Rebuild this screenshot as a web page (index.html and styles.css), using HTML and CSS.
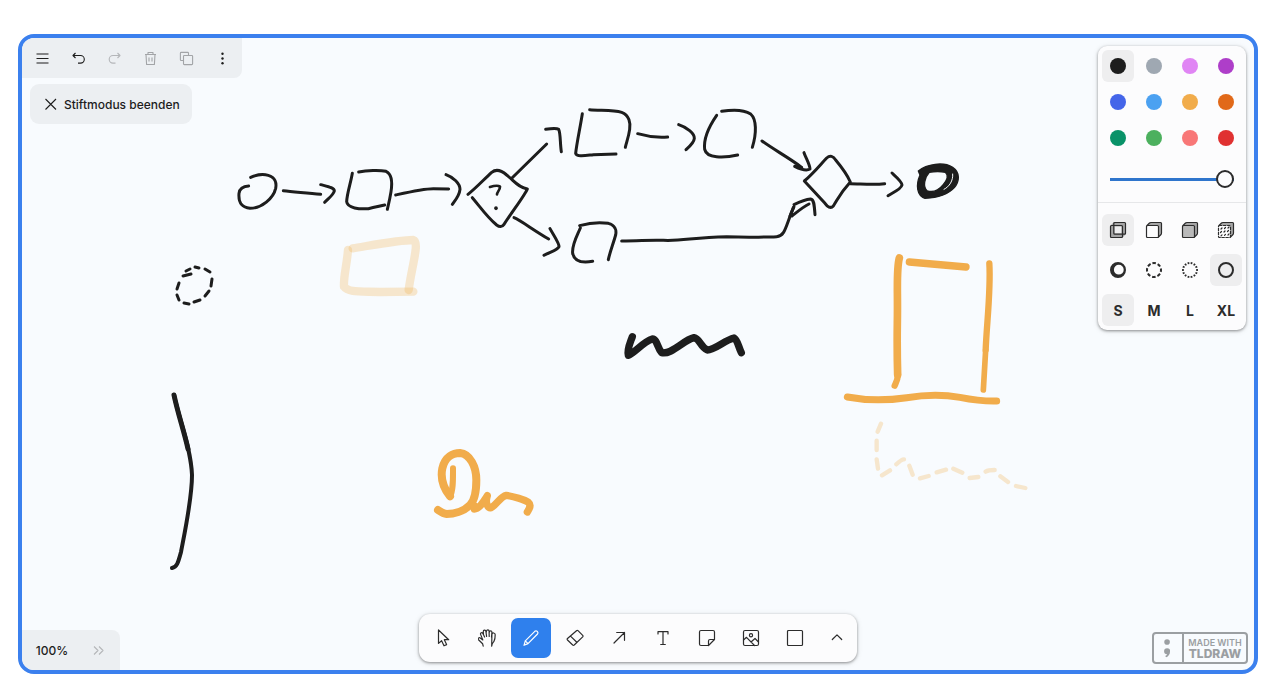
FILE: index.html
```html
<!DOCTYPE html>
<html lang="de">
<head>
<meta charset="utf-8">
<meta name="viewport" content="width=device-width, initial-scale=1">
<title>Whiteboard</title>
<link rel="stylesheet" href="styles.css">
</head>
<body>
<main class="board">
  <svg class="canvas" aria-label="Zeichenfläche">
    <g transform="translate(-22 -38)">
      <!-- flow chart, left part -->
      <g class="ink" transform="translate(220 90) scale(.33333)">
        <path d="M92 262C110 254 130 252 145 256C166 262 170 280 167 295C160 325 125 355 90 355C62 352 55 335 57 310C59 295 68 289 86 288"/>
        <path d="M190 302C220 306 260 308 302 313M302 284C325 290 343 293 343 303C340 315 325 325 314 337"/>
        <path d="M397 250C392 280 381 310 380 335C382 355 420 358 445 356C465 352 480 348 494 345M416 246C440 241 480 240 498 244C515 252 517 280 513 305C509 330 505 345 502 358"/>
        <path d="M527 315C580 303 610 296 640 296L686 297M678 254C700 262 720 280 720 298C718 318 706 330 697 343"/>
        <path d="M744 313C770 292 790 270 815 247C830 235 845 242 860 255C885 275 895 292 922 297C915 315 880 360 852 403C846 412 838 411 830 405C800 380 780 350 757 323"/>
        <path d="M810 291C820 288 835 286 840 290C840 300 832 305 831 313" stroke-width="8"/>
        <path d="M828 354V355" stroke-width="11"/>
        <path d="M876 264L980 162M882 383C900 390 940 420 986 447"/>
        <g class="marker">
          <path d="M384 480C380 530 370 560 372 590C385 608 420 604 480 606L580 605"/>
          <path d="M398 475C460 465 540 450 580 450C600 455 575 530 566 600"/>
        </g>
      </g>
      <!-- flow chart, middle part -->
      <g class="ink" transform="translate(540 90) scale(.33333)">
        <path d="M17 118C35 115 50 114 56 118C62 130 60 160 64 185M30 416C40 435 58 460 57 470C50 482 30 485 12 496"/>
        <path d="M127 71C121 110 110 160 107 190C110 202 140 196 160 194L228 192M149 59C180 62 220 60 245 67C268 75 272 100 269 118C266 140 260 155 256 172"/>
        <path d="M293 131C320 139 345 144 383 141M416 104C440 112 464 130 463 145C462 158 450 168 438 179"/>
        <path d="M530 76C510 105 490 145 494 178C500 205 550 205 593 195M545 64C575 59 610 58 632 72C650 88 650 130 637 172"/>
        <path d="M666 153C700 178 745 202 785 232"/>
        <path d="M121 414C110 440 95 465 98 490C103 515 125 520 158 514M119 407C150 398 180 396 205 400C225 405 230 420 227 435C220 460 210 485 205 509"/>
        <path d="M245 453C300 453 330 449 370 451C430 454 460 441 560 440C620 441 670 443 710 440C735 438 735 415 760 353"/>
      </g>
      <!-- flow chart, right part -->
      <g class="ink" transform="translate(740 90) scale(.33333)">
        <path d="M192 188C198 205 210 225 210 237C200 243 180 237 164 229L184 233"/>
        <path d="M162 344C180 335 200 328 212 327C222 328 223 345 225 374M156 378C170 367 190 350 207 342M150 378L162 350"/>
        <path d="M193 273C220 250 240 225 260 204C270 195 280 198 287 210C302 228 322 255 331 276C300 310 295 325 280 348C272 357 262 350 255 340Z"/>
        <path d="M331 281C360 281 400 286 434 281M456 249C468 260 486 275 486 285C483 298 460 307 444 317"/>
        <path class="blob" fill-rule="evenodd" d="M535 243C560 222 610 214 638 232C662 248 658 275 643 293C618 320 580 324 555 325C530 316 527 285 540 255ZM568 247C554 262 547 290 562 303C580 308 595 302 609 285C622 270 626 256 616 247C602 244 584 244 568 247Z"/>
        <path d="M612 298C628 290 640 272 638 252" stroke="#f8fbfe" stroke-width="3"/>
      </g>
      <!-- top hat and its dashed underline -->
      <g class="ink ink-orange" transform="translate(820 240) scale(.33333)">
        <path stroke-width="23" d="M238 54C228 90 234 150 232 250C231 320 232 370 233 404"/>
        <path stroke-width="19" d="M234 404C233 420 228 428 224 437"/>
        <path stroke-width="22" d="M268 66L438 81"/>
        <path stroke-width="19" d="M508 70C513 150 500 250 497 330"/>
        <path stroke-width="17" d="M497 330L490 450"/>
        <path stroke-width="21" d="M82 471C140 482 200 482 260 473C320 463 370 463 420 472C460 480 490 484 530 483"/>
        <path class="faint" stroke-width="13" d="M183 551L173 575M170 602V630M170 658L174 686M186 706L210 691M229 673C240 662 245 658 252 658M268 677L278 704M300 715L326 708M350 697L378 689M400 686L427 698M449 714L475 711M497 695C505 690 515 690 524 690M541 709L564 726M588 738L616 744"/>
      </g>
      <!-- squiggles -->
      <g class="ink" transform="translate(410 320) scale(.33333)">
        <path stroke-width="22" d="M667 50C660 70 650 90 655 106C675 98 700 65 727 57C742 58 742 85 755 98C785 105 820 60 852 53C870 56 870 80 892 90C915 90 945 60 972 54C983 60 985 80 994 98"/>
        <g class="ink-orange">
          <path stroke-width="18" d="M129 445C129 480 130 510 120 530"/>
          <path stroke-width="24" d="M120 529C105 510 90 480 97 445C105 410 130 399 150 399C180 402 199 440 199 480C199 510 195 540 180 555C160 575 130 582 110 582C100 581 90 574 84 570"/>
          <path stroke-width="22" d="M193 558V567C208 567 222 543 232 527C224 552 235 565 243 563C260 555 270 530 289 526C310 529 345 540 355 547C367 557 355 570 352 576"/>
        </g>
      </g>
      <g class="ink">
        <path stroke-width="3" d="M183 276L191 274M186 271L190 269M195 267L199 268M205 269L210 272M212 279L211 286M209 291L205 296M200 300L194 302M189 304L184 303M179 300L177 295M177 289L179 283"/>
        <path stroke-width="4" d="M174 395C179 419 191 448 192 475C192 498 186 526 181 552C178 563 177 567 172 568"/>
        <path stroke-width="5" d="M174 395C178 414 184 431 188 449"/>
      </g>
    </g>
  </svg>

  <header class="top">
    <div class="top-left">
      <nav class="menu" aria-label="Menü">
        <button aria-label="Menü"><svg class="icon-s" viewBox="0 0 15 15"><path d="M1.500 3H13.500M1.500 7.500H13.500M1.500 12H13.500"/></svg></button>
        <button aria-label="Rückgängig"><svg class="icon-s" viewBox="0 0 15 15"><path d="M4.500 2L2 4.500L4.500 7M2 4.500H9.500A3.800 3.800 0 0 1 9.500 12.100H7"/></svg></button>
        <button aria-label="Wiederholen" disabled><svg class="icon-s" viewBox="0 0 15 15"><path d="M10.500 2L13 4.500L10.500 7M13 4.500H6A3.800 3.800 0 0 0 6 12.100H8.500"/></svg></button>
        <button aria-label="Löschen" disabled class="mid"><svg class="icon-s" viewBox="0 0 15 15"><path d="M2 3.500H13M5 3.500V1.500H10V3.500M3 3.500L3.600 13.500H11.400L12 3.500M6 6.500V10.500M9 6.500V10.500"/></svg></button>
        <button aria-label="Duplizieren" disabled class="mid"><svg class="icon-s" viewBox="0 0 15 15"><path d="M4 9.500H2.200A.8 .8 0 0 1 1.400 8.700V2.200A.8 .8 0 0 1 2.200 1.400H8.700A.8 .8 0 0 1 9.500 2.200V4.500"/><rect x="4.500" y="4.500" width="9.100" height="9.100" rx=".8"/></svg></button>
        <button aria-label="Mehr"><svg class="icon-s dots" viewBox="0 0 15 15"><circle cx="7.500" cy="2.700" r="1.200"/><circle cx="7.500" cy="7.500" r="1.200"/><circle cx="7.500" cy="12.300" r="1.200"/></svg></button>
      </nav>
      <button class="exit"><svg class="icon-s" viewBox="0 0 15 15"><path d="M2.500 2L13 12.500M13 2L2.500 12.500"/></svg>Stiftmodus beenden</button>
    </div>

    <section class="styles" aria-label="Stile">
      <div class="colors">
        <button class="cell on c-black" aria-label="Schwarz"></button>
        <button class="cell c-grey" aria-label="Grau"></button>
        <button class="cell c-lviolet" aria-label="Hellviolett"></button>
        <button class="cell c-violet" aria-label="Violett"></button>
        <button class="cell c-blue" aria-label="Blau"></button>
        <button class="cell c-lblue" aria-label="Hellblau"></button>
        <button class="cell c-yellow" aria-label="Gelb"></button>
        <button class="cell c-orange" aria-label="Orange"></button>
        <button class="cell c-green" aria-label="Grün"></button>
        <button class="cell c-lgreen" aria-label="Hellgrün"></button>
        <button class="cell c-lred" aria-label="Hellrot"></button>
        <button class="cell c-red" aria-label="Rot"></button>
      </div>
      <div class="opacity"><input type="range" min="0" max="100" value="100" aria-label="Deckkraft"></div>
      <div class="options">
        <button class="cell on" aria-label="Keine Füllung"><svg class="icon" viewBox="0 0 18 18"><path class="shade" fill-rule="evenodd" d="M4.500 1.500H16.500V13.500L13.500 16.500H1.500V4.500ZM5.500 5.500V12.500H12.500V5.500Z"/><rect x="1.500" y="4.500" width="12" height="12" rx="1"/><rect x="4.800" y="1.500" width="11.700" height="11.700" rx="1"/></svg></button>
        <button class="cell" aria-label="Halb gefüllt"><svg class="icon" viewBox="0 0 18 18"><path class="shade" d="M2.500 4.500L5 1.500H16.500V13L13.500 15.500V4.500Z"/><rect class="paper" x="1.500" y="4.500" width="12" height="12" rx="1"/><path d="M2 4.500L4.500 2Q5 1.500 6 1.500H15.500Q16.500 1.500 16.500 2.500V12Q16.500 13 16 13.500L13.500 16"/></svg></button>
        <button class="cell" aria-label="Gefüllt"><svg class="icon" viewBox="0 0 18 18"><path class="shade" d="M2.500 4.500L5 1.500H16.500V13L13.500 15.500V4.500Z"/><rect class="light" x="1.500" y="4.500" width="12" height="12" rx="1"/><path d="M2 4.500L4.500 2Q5 1.500 6 1.500H15.500Q16.500 1.500 16.500 2.500V12Q16.500 13 16 13.500L13.500 16"/></svg></button>
        <button class="cell" aria-label="Muster"><svg class="icon" viewBox="0 0 18 18"><path class="shade" d="M2.500 4.500L5 1.500H16.500V13L13.500 15.500V4.500Z"/><rect class="paper" x="1.500" y="4.500" width="12" height="12" rx="1" stroke-dasharray="2.500 1.500"/><path d="M4 8L5 7M7.500 7.500L8.500 6.500M11 7L12 6M3.500 11.500L4.500 10.500M7 11L8 10M10.500 10.500L11.500 9.500M4 14.800L5 13.800M7.500 14.300L8.500 13.300M11 14L12 13"/><path d="M2 4.500L4.500 2Q5 1.500 6 1.500H15.500Q16.500 1.500 16.500 2.500V12Q16.500 13 16 13.500L13.500 16"/></svg></button>
        <button class="cell" aria-label="Gezeichnet"><svg class="icon bold" viewBox="0 0 18 18"><path class="solid" fill-rule="evenodd" d="M9 1A8 8 0 1 1 9 17A8 8 0 1 1 9 1ZM9.800 3.800A4.900 4.900 0 1 0 9.800 13.600A4.900 4.900 0 1 0 9.800 3.800Z"/></svg></button>
        <button class="cell" aria-label="Gestrichelt"><svg class="icon bold" viewBox="0 0 18 18"><circle cx="9" cy="9" r="7" pathLength="80" stroke-dasharray="6.500 3.500" stroke-dashoffset="3"/></svg></button>
        <button class="cell" aria-label="Gepunktet"><svg class="icon bold" viewBox="0 0 18 18"><circle cx="9" cy="9" r="7" pathLength="56" stroke-dasharray="2.200 1.800" stroke-dashoffset="1.100"/></svg></button>
        <button class="cell on" aria-label="Durchgezogen"><svg class="icon bold" viewBox="0 0 18 18"><circle cx="9" cy="9" r="7"/></svg></button>
        <button class="cell on">S</button>
        <button class="cell">M</button>
        <button class="cell">L</button>
        <button class="cell">XL</button>
      </div>
    </section>
  </header>

  <footer class="bottom">
    <div class="zoom">
      <button>100%</button>
      <button class="expand" aria-label="Minikarte"><svg class="icon-s" viewBox="0 0 15 15"><path d="M3 3.500L7 7.500L3 11.500M8 3.500L12 7.500L8 11.500"/></svg></button>
    </div>
    <div class="tools" role="toolbar" aria-label="Werkzeuge">
      <button aria-label="Auswahl"><svg class="icon" viewBox="0 0 18 18"><path d="M4.500 1V14.400L7.600 11.700L10 16.800L12.600 15.600L10.300 10.700H14.700Z"/></svg></button>
      <button aria-label="Hand"><svg class="icon" viewBox="0 0 18 18"><path d="M5.200 17.200L4.600 14.700L.5 10.700C-.4 9.500 1 8.100 2.300 9L4.800 10.900L2.600 5.400C2.100 3.600 4.200 3 4.900 4.500L6.600 8M5.500 5.800L5.300 2.700C5.200 .8 7.600 .6 7.900 2.300L8.600 7.400M8.200 3.500L8.500 1.900C8.900 .4 11 .5 11.100 2.100L11.200 7.500M11.200 3.600C11.300 1.300 13.900 1.400 13.900 3.200L13.500 8M13.900 5.400C14.200 3.400 17.200 3.500 17.200 5.700C17.200 7.800 16.900 10.500 16 12.200C15.400 13.400 14.400 14.200 14 15.600L13.700 17.200Z"/></svg></button>
      <button class="active" aria-label="Zeichnen"><svg class="icon" viewBox="0 0 18 18"><path d="M2 16.300L3.300 11.800L12.800 2.300Q14 1.200 15.300 2.400Q16.600 3.800 15.500 5L6 14.600ZM3.300 11.800L6 14.600"/></svg></button>
      <button aria-label="Radierer"><svg class="icon" viewBox="0 0 18 18"><path d="M10.500 1.700Q11.300 1 12 1.700L16.700 6.400Q17.300 7.200 16.700 7.900L8.200 16Q7.500 16.600 6.700 16L1.500 11Q.8 10.200 1.500 9.500ZM4.500 7.100L10.800 13.300"/></svg></button>
      <button aria-label="Pfeil"><svg class="icon" viewBox="0 0 18 18"><path d="M4 14L14.500 3.500M6.700 3.500H14.500V11.300"/></svg></button>
      <button aria-label="Text"><svg class="icon" viewBox="0 0 18 18"><path d="M4 5V2.700H14V5M9 2.700V15.500M6.700 15.500H11.300"/></svg></button>
      <button aria-label="Notiz"><svg class="icon" viewBox="0 0 18 18"><path d="M10.500 16.500H3Q1.500 16.500 1.500 15V3Q1.500 1.500 3 1.500H15Q16.500 1.500 16.500 3V10.500L10.500 16.500V12Q10.500 10.500 12 10.500H16.500"/></svg></button>
      <button aria-label="Bild"><svg class="icon" viewBox="0 0 18 18"><rect x="1.500" y="1.500" width="15" height="15" rx="1.500"/><circle cx="9" cy="6.200" r="1.600"/><path d="M1.500 11L4.500 8.300L12.500 16.500M9 13L13 9.500L16.500 13"/></svg></button>
      <button aria-label="Rechteck"><svg class="icon" viewBox="0 0 18 18"><rect x="1.500" y="1.500" width="15" height="15" rx="1"/></svg></button>
      <button class="more" aria-label="Mehr Werkzeuge"><svg class="icon" viewBox="0 0 18 18"><path d="M4.300 10.500L9 5.800L13.700 10.500"/></svg></button>
    </div>
    <a class="badge" href="#">
      <svg class="mark" viewBox="0 0 30 28"><circle cx="14" cy="7.500" r="3"/><path d="M14 14.300A3.200 3.200 0 0 1 17.200 17.800C17.200 20.800 15.500 23 13 24L12 22.500C13.100 22 13.800 21.300 14 20.700A3.200 3.200 0 0 1 14 14.300Z"/></svg>
      <span class="badge-text"><span class="made">MADE WITH</span><span class="brand">TLDRAW</span></span>
    </a>
  </footer>
</main>
</body>
</html>
```

FILE: styles.css
```css
* { box-sizing: border-box; }

body {
  margin: 0;
  padding: 34px 22px 11px 18px;
  min-height: 100vh;
  display: flex;
  background: #fff;
  color: #1d1d1d;
  font-family: Inter, "Liberation Sans", sans-serif;
  font-size: 12px;
}

button {
  margin: 0;
  padding: 0;
  border: 0;
  background: none;
  color: inherit;
  font: inherit;
  display: flex;
  align-items: center;
  justify-content: center;
}
button:disabled { color: #b4b6b9; }
button.mid:disabled { color: #a2a4a7; }

.board {
  position: relative;
  flex: 1;
  display: flex;
  flex-direction: column;
  justify-content: space-between;
  border: 4px solid #3b80ee;
  border-radius: 16px;
  background: #f8fbfe;
  overflow: hidden;
}

/* drawing surface under the controls */
.canvas {
  position: absolute;
  inset: 0;
  width: 100%;
  height: 100%;
}
.ink {
  fill: none;
  stroke: #1d1d1d;
  stroke-width: 9;
  stroke-linecap: round;
  stroke-linejoin: round;
}
.ink-orange { stroke: #f1ac4b; }
.faint { opacity: .27; }
.marker { stroke: #f1ac4b; stroke-width: 25; }
.marker path { opacity: .27; }
.blob { fill: #1d1d1d; stroke-width: 4; }

.icon-s, .icon {
  width: 15px;
  height: 15px;
  fill: none;
  stroke: currentColor;
  stroke-width: 1.1;
  stroke-linejoin: round;
}
.icon { width: 18px; height: 18px; stroke-width: 1.2; stroke-linecap: round; }
.dots { fill: currentColor; stroke: none; }
.bold { stroke-width: 2; stroke-linecap: butt; }
.shade { fill: #a5a5a5; stroke: none; }
.light { fill: #b9b9b9; }
.paper { fill: #fcfcfd; }
.solid { fill: currentColor; stroke: none; }

.top, .bottom {
  position: relative;
  display: flex;
  justify-content: space-between;
}
.top { align-items: flex-start; }

.menu {
  display: flex;
  height: 40px;
  padding: 0 2px;
  border-radius: 0 0 8px 0;
  background: #eceff2;
}
.menu button { width: 36px; }

.exit {
  height: 40px;
  margin: 6px 8px;
  padding: 0 12px 0 13px;
  gap: 6px;
  border-radius: 9px;
  background: #eceff2;
  font-weight: 500;
}

.styles {
  margin: 8px;
  border-radius: 9px;
  background: #fcfcfd;
  box-shadow: 0 1px 3px rgba(0, 0, 0, .4), 0 1px 6px rgba(0, 0, 0, .1);
}
.colors, .options {
  display: grid;
  grid-template-columns: repeat(4, 32px);
  gap: 4px;
  padding: 4px;
}
.cell {
  height: 32px;
  border-radius: 6px;
  color: #2c2c2c;
  font-size: 14px;
  font-weight: 700;
}
.cell.on { background: #eeeeef; }
.colors .cell::before {
  content: "";
  width: 16px;
  height: 16px;
  border-radius: 50%;
  background: currentColor;
}
.colors .c-black { color: #1d1d1d; }
.colors .c-grey { color: #9fa8b2; }
.colors .c-lviolet { color: #e085f4; }
.colors .c-violet { color: #ae3ec9; }
.colors .c-blue { color: #4465e9; }
.colors .c-lblue { color: #4ba1f1; }
.colors .c-yellow { color: #f1ac4b; }
.colors .c-orange { color: #e16919; }
.colors .c-green { color: #099268; }
.colors .c-lgreen { color: #4cb05e; }
.colors .c-lred { color: #f87777; }
.colors .c-red { color: #e03131; }

.opacity {
  display: flex;
  align-items: center;
  height: 45px;
  padding: 0 12px 2px;
  border-bottom: 1px solid #e6e7e9;
}
.opacity input {
  appearance: none;
  width: 124px;
  height: 18px;
  margin: 0;
  background: linear-gradient(#2f75cc, #2f75cc) center / 100% 3px no-repeat;
}
.opacity input::-webkit-slider-thumb {
  appearance: none;
  width: 18px;
  height: 18px;
  border: 2px solid #2c2c2c;
  border-radius: 50%;
  background: #fcfcfd;
}
.options { padding-top: 11px; row-gap: 8px; }

.bottom {
  display: grid;
  grid-template-columns: 1fr auto 1fr;
  align-items: end;
}
.zoom {
  justify-self: start;
  display: flex;
  height: 40px;
  border-radius: 0 8px 0 0;
  background: #eceff2;
}
.zoom button { width: 60px; font-weight: 500; }
.zoom .expand { width: 38px; padding-right: 6px; color: #b4b6b9; }

.tools {
  display: flex;
  gap: 4px;
  margin-bottom: 8px;
  padding: 4px 2px 4px 4px;
  border-radius: 11px;
  background: #fcfcfd;
  box-shadow: 0 1px 3px rgba(0, 0, 0, .4), 0 1px 6px rgba(0, 0, 0, .1);
}
.tools button {
  width: 40px;
  height: 40px;
  border-radius: 7px;
  color: #2c2c2c;
}
.tools .active { background: #2f80ed; color: #fff; }
.tools .more { width: 36px; }

.badge {
  justify-self: end;
  display: flex;
  width: 96px;
  height: 32px;
  margin: 0 6px 6px;
  border: 2px solid #9b9fa2;
  border-radius: 4px;
  color: #9b9fa2;
  text-decoration: none;
}
.mark { width: 30px; height: 28px; fill: currentColor; border-right: 2px solid #9b9fa2; }
.badge-text {
  flex: 1;
  display: flex;
  flex-direction: column;
  align-items: center;
  justify-content: center;
  white-space: nowrap;
}
.made { font-size: 9px; font-weight: 600; line-height: 11px; }
.brand { font-size: 12px; font-weight: 800; line-height: 12px; }
```
